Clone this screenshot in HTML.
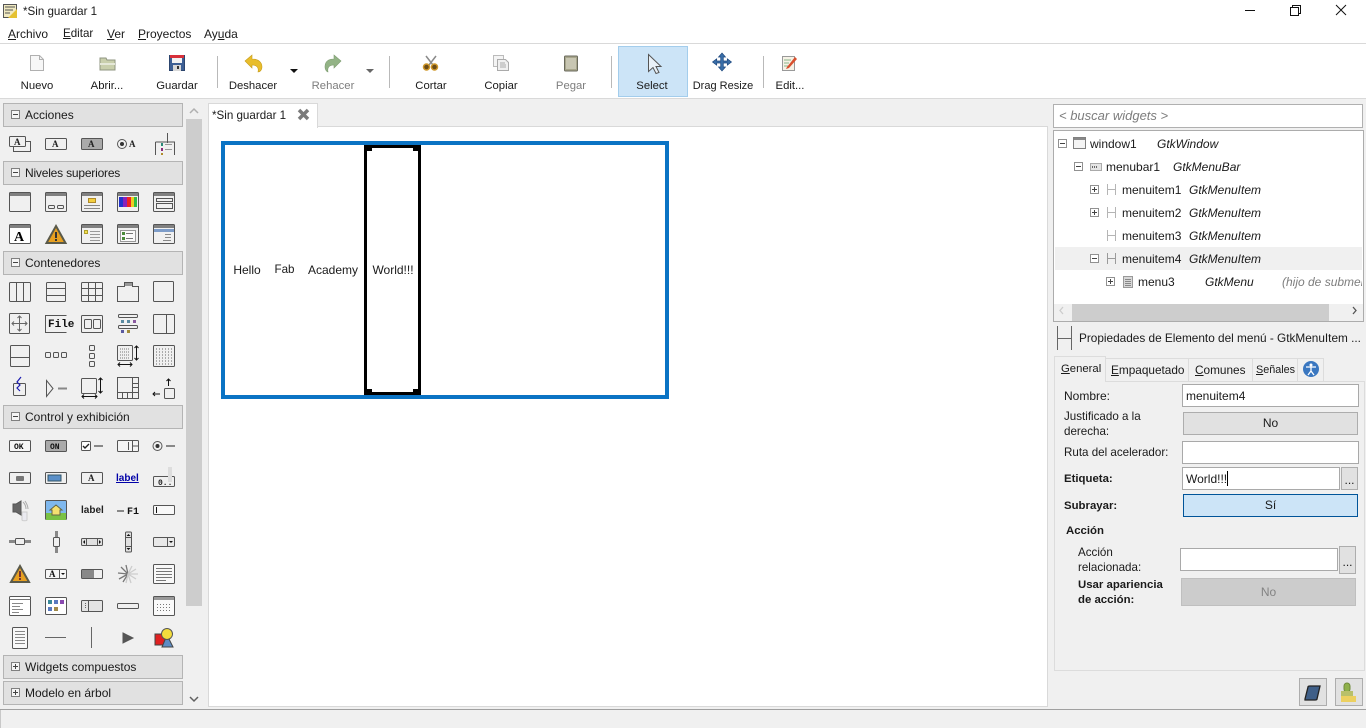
<!DOCTYPE html>
<html lang="es"><head><meta charset="utf-8"><title>Sin guardar 1</title>
<style>
html,body{margin:0;padding:0;width:1366px;height:728px;overflow:hidden;background:#f0f0f0;font-family:"Liberation Sans",sans-serif;font-size:12px;color:#1a1a1a}
.a{position:absolute;box-sizing:border-box}
.t{position:absolute;white-space:nowrap;line-height:16px;height:16px}
.c{text-align:center}
.g{color:#7d7d7d}
.i{font-style:italic}
.b{font-weight:bold;font-size:11.400px}
.s{font-size:11.300px}
.m{font-size:11.600px}
.h{position:absolute;left:3px;width:180px;height:24px;background:#e1e1e1;border:1px solid #b4b4b4;box-sizing:border-box}
.h span{position:absolute;left:21px;top:3px;line-height:16px;white-space:nowrap}
.h i{position:absolute;left:7px;top:6px;width:9px;height:9px;border:1px solid #808080;box-sizing:border-box;background:#f5f5f5}
.h i:before{content:"";position:absolute;left:1px;top:3px;width:5px;height:1px;background:#444}
.h i.p:after{content:"";position:absolute;left:3px;top:1px;width:1px;height:5px;background:#444}
.e{position:absolute;box-sizing:border-box;background:#fff;border:1px solid #a9a9a9}
.btn{position:absolute;box-sizing:border-box;background:#e1e1e1;border:1px solid #adadad;text-align:center}
.x{position:absolute;width:9px;height:9px;border:1px solid #919191;box-sizing:border-box;background:#fff}
.x:before{content:"";position:absolute;left:1px;top:3px;width:5px;height:1px;background:#444}
.x.p:after{content:"";position:absolute;left:3px;top:1px;width:1px;height:5px;background:#444}
u{text-decoration:underline}
svg{position:absolute;left:0;top:0}
</style></head><body>

<!-- title + toolbar background -->
<div class="a" style="left:0;top:0;width:1366px;height:44px;background:#fff;border-bottom:1px solid #d9d9d9"></div>
<div class="a" style="left:0;top:44px;width:1366px;height:55px;background:#fff;border-bottom:1px solid #d9d9d9"></div>

<div class="t m" style="left:23px;top:4px">*Sin guardar 1</div>
<div class="t" style="left:8px;top:26px"><u>A</u>rchivo</div>
<div class="t m" style="left:63px;top:26px"><u>E</u>ditar</div>
<div class="t" style="left:107px;top:26px"><u>V</u>er</div>
<div class="t" style="left:138px;top:26px"><u>P</u>royectos</div>
<div class="t" style="left:204px;top:26px">Ay<u>u</u>da</div>

<div class="a" style="left:618px;top:46px;width:70px;height:51px;background:#cce4f7;border:1px solid #a3cdec"></div>

<div class="t c s" style="left:7px;width:60px;top:78px">Nuevo</div>
<div class="t c s" style="left:77px;width:60px;top:78px">Abrir...</div>
<div class="t c s" style="left:147px;width:60px;top:78px">Guardar</div>
<div class="t c s" style="left:223px;width:60px;top:78px">Deshacer</div>
<div class="t c g s" style="left:303px;width:60px;top:78px">Rehacer</div>
<div class="t c s" style="left:401px;width:60px;top:78px">Cortar</div>
<div class="t c s" style="left:471px;width:60px;top:78px">Copiar</div>
<div class="t c g s" style="left:541px;width:60px;top:78px">Pegar</div>
<div class="t c s" style="left:622px;width:60px;top:78px">Select</div>
<div class="t c" style="left:688px;width:70px;top:78px;font-size:11px">Drag Resize</div>
<div class="t c s" style="left:760px;width:60px;top:78px">Edit...</div>

<!-- palette headers -->
<div class="h" style="top:103px"><i></i><span>Acciones</span></div>
<div class="h" style="top:161px"><i></i><span style="letter-spacing:-.2px">Niveles superiores</span></div>
<div class="h" style="top:251px"><i></i><span>Contenedores</span></div>
<div class="h" style="top:405px"><i></i><span>Control y exhibición</span></div>
<div class="h" style="top:655px"><i class="p"></i><span>Widgets compuestos</span></div>
<div class="h" style="top:681px"><i class="p"></i><span>Modelo en árbol</span></div>

<!-- palette scrollbar -->
<div class="a" style="left:186px;top:119px;width:16px;height:487px;background:#cdcdcd"></div>

<!-- notebook -->
<div class="a" style="left:208px;top:126px;width:840px;height:581px;background:#fff;border:1px solid #d9d9d9"></div>
<div class="a" style="left:208px;top:103px;width:110px;height:25px;background:#fff;border:1px solid #d9d9d9;border-bottom:none"></div>
<div class="t m" style="left:212px;top:108px">*Sin guardar 1</div>

<!-- design surface -->
<div class="a" style="left:221px;top:141px;width:448px;height:258px;background:#fff;border:4px solid #0a73c4"></div>
<div class="t c" style="left:226px;width:42px;top:262px">Hello</div>
<div class="t c m" style="left:268px;width:33px;top:262px">Fab</div>
<div class="t c" style="left:301px;width:64px;top:262px">Academy</div>
<div class="t c" style="left:365px;width:56px;top:262px">World!!!</div>
<div class="a" style="left:364px;top:145px;width:57px;height:250px;border:3px solid #000"></div>
<div class="a" style="left:364px;top:145px;width:8px;height:6px;background:#000"></div>
<div class="a" style="left:413px;top:145px;width:8px;height:6px;background:#000"></div>
<div class="a" style="left:364px;top:389px;width:8px;height:6px;background:#000"></div>
<div class="a" style="left:413px;top:389px;width:8px;height:6px;background:#000"></div>

<!-- search -->
<div class="e" style="left:1053px;top:104px;width:310px;height:24px;border-color:#b0b0b0"></div>
<div class="t i g" style="left:1059px;top:108px;font-size:13px">&lt; buscar widgets &gt;</div>

<!-- tree -->
<div class="e" style="left:1053px;top:130px;width:311px;height:192px;border-color:#acacac"></div>
<div class="a" style="left:1055px;top:247px;width:307px;height:23px;background:#f0f0f0"></div>
<div class="x" style="left:1058px;top:139px"></div>
<div class="x" style="left:1074px;top:162px"></div>
<div class="x p" style="left:1090px;top:185px"></div>
<div class="x p" style="left:1090px;top:208px"></div>
<div class="x" style="left:1090px;top:254px"></div>
<div class="x p" style="left:1106px;top:277px"></div>
<div class="t" style="left:1090px;top:136px">window1</div><div class="t i" style="left:1157px;top:136px">GtkWindow</div>
<div class="t" style="left:1106px;top:159px">menubar1</div><div class="t i" style="left:1173px;top:159px">GtkMenuBar</div>
<div class="t" style="left:1122px;top:182px">menuitem1</div><div class="t i" style="left:1189px;top:182px">GtkMenuItem</div>
<div class="t" style="left:1122px;top:205px">menuitem2</div><div class="t i" style="left:1189px;top:205px">GtkMenuItem</div>
<div class="t" style="left:1122px;top:228px">menuitem3</div><div class="t i" style="left:1189px;top:228px">GtkMenuItem</div>
<div class="t" style="left:1122px;top:251px">menuitem4</div><div class="t i" style="left:1189px;top:251px">GtkMenuItem</div>
<div class="t" style="left:1138px;top:274px">menu3</div><div class="t i" style="left:1205px;top:274px">GtkMenu</div>
<div class="a" style="left:1282px;top:274px;width:80px;height:16px;overflow:hidden"><div class="t i g" style="left:0;top:0">(hijo de submenu)</div></div>
<div class="a" style="left:1054px;top:304px;width:309px;height:17px;background:#f0f0f0"></div>
<div class="a" style="left:1072px;top:304px;width:257px;height:17px;background:#cdcdcd"></div>

<!-- properties header -->
<div class="t" style="left:1079px;top:330px;font-size:11.800px">Propiedades de Elemento del menú - GtkMenuItem ...</div>

<!-- tabs -->
<div class="a" style="left:1054px;top:381px;width:311px;height:290px;border:1px solid #dcdcdc;background:#f0f0f0"></div>
<div class="a" style="left:1054px;top:356px;width:52px;height:26px;background:#f0f0f0;border:1px solid #dcdcdc;border-bottom:none"></div>
<div class="a" style="left:1106px;top:358px;width:83px;height:23px;border:1px solid #dcdcdc;border-left:none;border-bottom:none"></div>
<div class="a" style="left:1189px;top:358px;width:64px;height:23px;border:1px solid #dcdcdc;border-left:none;border-bottom:none"></div>
<div class="a" style="left:1253px;top:358px;width:45px;height:23px;border:1px solid #dcdcdc;border-left:none;border-bottom:none"></div>
<div class="a" style="left:1298px;top:358px;width:26px;height:23px;border:1px solid #dcdcdc;border-left:none;border-bottom:none"></div>
<div class="t" style="left:1061px;top:361px;font-size:11.300px"><u>G</u>eneral</div>
<div class="t" style="left:1111px;top:362px;font-size:11.800px"><u>E</u>mpaquetado</div>
<div class="t" style="left:1195px;top:362px;font-size:11.800px"><u>C</u>omunes</div>
<div class="t" style="left:1256px;top:362px;font-size:10.800px"><u>S</u>eñales</div>

<!-- form -->
<div class="t" style="left:1064px;top:388px">Nombre:</div>
<div class="e" style="left:1182px;top:384px;width:177px;height:23px"></div>
<div class="t" style="left:1186px;top:388px">menuitem4</div>
<div class="t m" style="left:1064px;top:409px">Justificado a la</div>
<div class="t m" style="left:1064px;top:424px">derecha:</div>
<div class="btn" style="left:1183px;top:412px;width:175px;height:23px;line-height:21px">No</div>
<div class="t m" style="left:1064px;top:445px">Ruta del acelerador:</div>
<div class="e" style="left:1182px;top:441px;width:177px;height:23px"></div>
<div class="t b" style="left:1064px;top:471px">Etiqueta:</div>
<div class="e" style="left:1182px;top:467px;width:158px;height:23px"></div>
<div class="t" style="left:1186px;top:471px">World!!!</div>
<div class="a" style="left:1227px;top:471px;width:1px;height:15px;background:#000"></div>
<div class="btn" style="left:1341px;top:467px;width:17px;height:23px;line-height:24px">...</div>
<div class="t b" style="left:1064px;top:498px">Subrayar:</div>
<div class="btn" style="left:1183px;top:494px;width:175px;height:23px;line-height:21px;background:#cce4f7;border-color:#005499">Sí</div>
<div class="t b" style="left:1066px;top:523px">Acción</div>
<div class="t m" style="left:1078px;top:545px">Acción</div>
<div class="t m" style="left:1078px;top:560px">relacionada:</div>
<div class="e" style="left:1180px;top:548px;width:158px;height:23px"></div>
<div class="btn" style="left:1339px;top:546px;width:17px;height:28px;line-height:30px">...</div>
<div class="t b" style="left:1078px;top:577px">Usar apariencia</div>
<div class="t b" style="left:1078px;top:592px">de acción:</div>
<div class="btn" style="left:1181px;top:578px;width:175px;height:28px;line-height:26px;background:#cccccc;border-color:#bfbfbf;color:#838383">No</div>

<div class="btn" style="left:1299px;top:678px;width:28px;height:28px"></div>
<div class="btn" style="left:1335px;top:678px;width:28px;height:28px"></div>

<!-- status -->
<div class="a" style="left:0;top:709px;width:1366px;height:1px;background:#a0a0a0"></div>
<div class="a" style="left:0;top:710px;width:1px;height:18px;background:#c8c8c8"></div>

<!-- vector layer -->
<svg width="1366" height="728" viewBox="0 0 1366 728" font-family="Liberation Sans, sans-serif">
<!-- window controls -->
<g fill="none" stroke="#111" stroke-width="1">
<path d="M1245 10.500h10"/>
<path d="M1290.500 7.500h8v8h-8z"/><path d="M1292.500 7.500v-2h8v8h-2"/>
<path d="M1336 5l10 10M1346 5l-10 10"/>
</g>
<!-- app icon -->
<rect x="3.500" y="4.500" width="13" height="13" fill="#f0e9c0" stroke="#555"/>
<path d="M5 7h10M5 10h8M5 13h5" stroke="#555"/>
<path d="M8 18L17 9v9z" fill="#e5c233"/>

<!-- toolbar icons -->
<path d="M30.500 55.500h9l4 4v11h-13z" fill="#f7f7f7" stroke="#b0b0b0"/>
<path d="M39.500 55.500v4h4" fill="none" stroke="#b0b0b0"/>
<path d="M100 58h6l1 2h8v10H100z" fill="#c9cfac" stroke="#8f9480"/><path d="M100 64h15" stroke="#e5e8d8" stroke-width="2"/>
<rect x="169.500" y="55.500" width="15" height="15" fill="#3d5f94" stroke="#2c456e"/><rect x="170" y="55" width="14" height="3" fill="#d8303a"/><rect x="172" y="58" width="10" height="5" fill="#f2f2f2"/><rect x="173" y="65" width="8" height="6" fill="#d8d8d8"/><rect x="177" y="66" width="2" height="3" fill="#333"/>
<path d="M245 61l7-6v4c6 0 10 3 10 8 0 3-2 5-4 5 1-4-1-7-6-7v3z" fill="#e8bd2c" stroke="#c79c1c" stroke-width=".6"/>
<path d="M341 61l-7-6v4c-6 0-9 3-9 8 0 3 2 5 3 5-1-4 1-7 6-7v3z" fill="#93b386" stroke="#7d9c70" stroke-width=".6"/>
<path d="M290 69h8l-4 4z" fill="#111"/><path d="M366 69h8l-4 4z" fill="#666"/>
<path d="M426 56l7 9M436 56l-7 9" stroke="#8a8a8a" stroke-width="1.500"/><circle cx="426.500" cy="67" r="3" fill="#6b4c18" stroke="#d0982a" stroke-width="1.500"/><circle cx="434.500" cy="67" r="3" fill="#6b4c18" stroke="#d0982a" stroke-width="1.500"/>
<rect x="493.500" y="55.500" width="10" height="11" fill="#f4f4f4" stroke="#bbb"/><path d="M497.500 59.500h8l3 3v8h-11z" fill="#f0f0f0" stroke="#aaa"/><path d="M500 63h5M500 65h6M500 67h6" stroke="#aaa"/>
<rect x="564.500" y="56" width="13" height="15" rx="1" fill="#a8a68c" stroke="#6a6a5c"/><rect x="566" y="58" width="10" height="11" fill="#c8c6b2"/>
<path d="M648.500 54.500l12.500 12h-5l3 6-3 1-3-6-4.500 4z" fill="#e9f1f8" stroke="#555"/>
<g fill="#3a6ea8" stroke="#1f4a80" stroke-width=".7"><path d="M722 53l3.500 4h-2.200v4h4v-2.200l4.200 3.200-4.200 3.200v-2.200h-4v4h2.200l-3.500 4-3.500-4h2.200v-4h-4v2.200l-4.200-3.200 4.200-3.200v2.200h4v-4h-2.200z"/></g>
<rect x="782.500" y="56.500" width="12" height="14" fill="#f6f2e6" stroke="#999"/><path d="M784 60h7M784 63h5M784 66h4" stroke="#8ab58a"/><path d="M787 67l8-10 2 2-8 9-3 1z" fill="#d9502e"/>

<!-- separators -->
<g fill="#b9b9b9"><rect x="217" y="56" width="1" height="32"/><rect x="389" y="56" width="1" height="32"/><rect x="611" y="56" width="1" height="32"/><rect x="763" y="56" width="1" height="32"/></g>

<!-- palette scroll arrows -->
<path d="M190 113l4-4 4 4" fill="none" stroke="#b0b0b0" stroke-width="1.500"/>
<path d="M190 697l4 4 4-4" fill="none" stroke="#606060" stroke-width="1.500"/>

<!-- tab close -->
<path d="M299 110l9 9M308 110l-9 9" stroke="#7a7a7a" stroke-width="3.500"/>

<!-- palette icons -->
<g fill="#f0f0f0" stroke="#555" stroke-width="1" font-weight="bold" font-size="9" font-family="Liberation Serif, serif">
<!-- row acciones -->
<rect x="13.500" y="141.500" width="17" height="10"/><rect x="9.500" y="136.500" width="16" height="10" rx="1"/>
<text x="14" y="145" fill="#222" stroke="none">A</text>
<rect x="45.500" y="138.500" width="21" height="11" rx="1"/><text x="52" y="147" fill="#222" stroke="none">A</text>
<rect x="81.500" y="138.500" width="21" height="11" rx="1" fill="#aaa"/><text x="88" y="147" fill="#222" stroke="none">A</text>
<circle cx="122" cy="144" r="4.500" fill="#f0f0f0"/><circle cx="122" cy="144" r="2" fill="#333" stroke="none"/><text x="129" y="147" fill="#222" stroke="none">A</text>
<path d="M155.500 142v13M167.500 133v10M155.500 142h19v13M155.500 142" fill="none"/>
<rect x="161" y="143" width="2" height="3" fill="#2a8a7a" stroke="none"/><rect x="161" y="148" width="2" height="3" fill="#8a2a7a" stroke="none"/><rect x="161" y="153" width="2" height="2" fill="#b08a2a" stroke="none"/>
<path d="M165 144.500h7M165 149.500h7" stroke="#999"/>

<!-- niveles row 1 -->
<rect x="9.500" y="192.500" width="21" height="19" rx="1"/><rect x="10" y="193" width="20" height="3" fill="#808080" stroke="none"/>
<rect x="45.500" y="192.500" width="21" height="19" rx="1"/><rect x="46" y="193" width="20" height="3" fill="#808080" stroke="none"/><rect x="48.500" y="205.500" width="6" height="3" rx="1"/><rect x="57.500" y="205.500" width="6" height="3" rx="1"/>
<rect x="81.500" y="192.500" width="21" height="19" rx="1"/><rect x="82" y="193" width="20" height="3" fill="#808080" stroke="none"/><rect x="88.500" y="198.500" width="7" height="4" fill="#f3cf3f" stroke="#b08a2a"/><path d="M84 205.500h16M84 208.500h16" stroke="#888"/>
<rect x="117.500" y="192.500" width="21" height="19" rx="1"/><rect x="118" y="193" width="20" height="3" fill="#808080" stroke="none"/>
<rect x="119" y="197" width="4" height="10" fill="#2233cc" stroke="none"/><rect x="123" y="197" width="4" height="10" fill="#8822bb" stroke="none"/><rect x="127" y="197" width="4" height="10" fill="#ee2222" stroke="none"/><rect x="131" y="197" width="3" height="10" fill="#eecc22" stroke="none"/><rect x="134" y="197" width="3" height="10" fill="#33bb44" stroke="none"/>
<rect x="153.500" y="192.500" width="21" height="19" rx="1"/><rect x="154" y="193" width="20" height="3" fill="#808080" stroke="none"/><rect x="156.500" y="198.500" width="16" height="3" fill="none"/><rect x="156.500" y="203.500" width="16" height="5" fill="none"/>

<!-- niveles row 2 -->
<rect x="9.500" y="224.500" width="21" height="19" rx="1" fill="#fff"/><rect x="10" y="225" width="20" height="3" fill="#808080" stroke="none"/><text x="14" y="241" font-size="14" fill="#000" stroke="none">A</text>
<path d="M56 226l9.500 17h-19z" fill="#e8a020" stroke="#5a5a4a" stroke-width="2"/><rect x="55" y="232" width="2" height="6" fill="#333" stroke="none"/><rect x="55" y="239" width="2" height="2" fill="#333" stroke="none"/>
<rect x="81.500" y="224.500" width="21" height="19" rx="1"/><rect x="82" y="225" width="20" height="3" fill="#808080" stroke="none"/><rect x="84.500" y="230.500" width="3" height="3" fill="#f3e04f" stroke="#b0a02a"/><path d="M90 231.500h10M90 234.500h10M90 237.500h10M90 240.500h10" stroke="#999"/>
<rect x="117.500" y="224.500" width="21" height="19" rx="1"/><rect x="118" y="225" width="20" height="3" fill="#808080" stroke="none"/><rect x="120.500" y="230.500" width="15" height="11" fill="#fafafa" stroke="#999"/><rect x="122" y="232" width="3" height="3" fill="#4a8a3a" stroke="none"/><rect x="122" y="237" width="3" height="3" fill="#4a8a3a" stroke="none"/><path d="M126 233.500h7M126 238.500h7" stroke="#777"/>
<rect x="153.500" y="224.500" width="21" height="19" rx="1"/><rect x="154" y="225" width="20" height="3" fill="#808080" stroke="none"/><rect x="154" y="229" width="20" height="3" fill="#7d9cc8" stroke="none"/><path d="M165 234.500h6M165 237.500h6M163 240.500h8" stroke="#888"/>

<!-- contenedores 292 -->
<rect x="9.500" y="282.500" width="21" height="19" rx="1"/><path d="M16.500 282.500v19M23.500 282.500v19"/>
<rect x="46.500" y="282.500" width="19" height="19" rx="1"/><path d="M46.500 288.500h19M46.500 295.500h19"/>
<rect x="81.500" y="282.500" width="21" height="19" rx="1"/><path d="M88.500 282.500v19M95.500 282.500v19M81.500 288.500h21M81.500 295.500h21"/>
<path d="M117.500 301.500v-15h7v-4h8v4h6v15z"/><rect x="125" y="283" width="7" height="3" fill="#999" stroke="none"/>
<rect x="153.500" y="281.500" width="20" height="20" rx="1"/>

<!-- 324 -->
<rect x="9.500" y="313.500" width="20" height="20" rx="1"/><path d="M19.500 316v15M12 323.500h15M17.500 318l2-2 2 2M17.500 329l2 2 2-2M14 321.500l-2 2 2 2M25 321.500l2 2-2 2" fill="none" stroke="#666"/>
<path d="M66.500 315.500h-21v17h21" fill="#f0f0f0"/><text x="48" y="327" font-family="Liberation Mono, monospace" font-size="11" fill="#111" stroke="none">File</text>
<rect x="81.500" y="315.500" width="21" height="17" rx="1"/><rect x="84.500" y="319.500" width="7" height="9" rx="1"/><rect x="93.500" y="319.500" width="7" height="9" rx="1"/>
<rect x="118.500" y="314.500" width="19" height="3" rx="1" fill="none"/><rect x="118.500" y="325.500" width="19" height="3" rx="1" fill="none"/>
<rect x="121" y="320" width="3" height="3" fill="#5a8aa0" stroke="none"/><rect x="127" y="320" width="3" height="3" fill="#5a8aa0" stroke="none"/><rect x="133" y="320" width="3" height="3" fill="#8a5aa0" stroke="none"/><rect x="121" y="330" width="3" height="3" fill="#5a5aa0" stroke="none"/><rect x="127" y="330" width="3" height="3" fill="#a08a3a" stroke="none"/>
<rect x="153.500" y="314.500" width="21" height="19" rx="1"/><path d="M166.500 314.500v19"/>

<!-- 356 -->
<rect x="10.500" y="345.500" width="19" height="21" rx="1"/><path d="M10.500 357.500h19"/>
<rect x="45.500" y="352.500" width="5" height="5" rx="1"/><rect x="53.500" y="352.500" width="5" height="5" rx="1"/><rect x="61.500" y="352.500" width="5" height="5" rx="1"/>
<rect x="89.500" y="345.500" width="5" height="5" rx="1"/><rect x="89.500" y="353.500" width="5" height="5" rx="1"/><rect x="89.500" y="361.500" width="5" height="5" rx="1"/>
<rect x="117.500" y="345.500" width="15" height="15" rx="1"/><path d="M120 349h10M120 352h10M120 355h10M120 358h10" stroke="#777" stroke-dasharray="1 1"/><path d="M136.500 346v14M134.500 348l2-2 2 2M134.500 358l2 2 2-2M118 364.500h14M120 362.500l-2 2 2 2M130 362.500l2 2-2 2" fill="none" stroke="#111"/>
<rect x="153.500" y="345.500" width="21" height="21" rx="1"/><path d="M156 349h16M156 352h16M156 355h16M156 358h16M156 361h16M156 364h16" stroke="#666" stroke-dasharray="1 2"/>

<!-- 388 -->
<rect x="13.500" y="383.500" width="12" height="12" rx="1"/><path d="M21 377l-4 5 3 3-3 3 3 3" fill="none" stroke="#1a1ab0" stroke-width="1.200"/>
<path d="M46.500 380.500l6.500 8-6.500 8z"/><path d="M58 388.500h9" stroke="#888" stroke-width="2"/>
<rect x="81.500" y="378.500" width="15" height="15" rx="1"/><path d="M100.500 378v15M98.500 380l2-2 2 2M98.500 391l2 2 2-2M82 396.500h15M84 394.500l-2 2 2 2M95 394.500l2 2-2 2" fill="none" stroke="#111"/>
<rect x="117.500" y="377.500" width="21" height="21" fill="#f0f0f0"/><path d="M132.500 377.500v21M117.500 392.500h21M132.500 383.500h6M132.500 387.500h6M122.500 392.500v6M127.500 392.500v6"/>
<path d="M168.500 386v-7M166.500 381l2-2 2 2M153 394h7M155 392l-2 2 2 2" fill="none" stroke="#111"/><rect x="164.500" y="388.500" width="10" height="10" rx="1"/>

<!-- 446 -->
<rect x="9.500" y="440.500" width="21" height="11" rx="1" fill="#f5f5f5"/><text x="14" y="449" font-family="Liberation Mono, monospace" font-size="8" fill="#111" stroke="none">OK</text>
<rect x="45.500" y="440.500" width="21" height="11" rx="1" fill="#aaa"/><text x="50" y="449" font-family="Liberation Mono, monospace" font-size="8" fill="#111" stroke="none">ON</text>
<rect x="81.500" y="441.500" width="9" height="9" rx="1" fill="#fff"/><path d="M83 446l2 2 4-4" fill="none" stroke="#222" stroke-width="1.400"/><path d="M94 446h9" stroke="#888" stroke-width="2"/>
<rect x="117.500" y="440.500" width="21" height="11" rx="1" fill="#f5f5f5"/><path d="M128.500 442v8M132.500 440.500v11M132.500 446h6"/>
<circle cx="157.500" cy="446" r="4.500"/><circle cx="157.500" cy="446" r="2" fill="#333" stroke="none"/><path d="M166 446h9" stroke="#888" stroke-width="2"/>

<!-- 478 -->
<rect x="9.500" y="472.500" width="21" height="11" rx="1"/><rect x="16" y="476" width="8" height="5" rx="1" fill="#777" stroke="none"/>
<rect x="45.500" y="472.500" width="21" height="11" rx="1"/><rect x="48" y="475" width="13" height="6" fill="#5a8fc8" stroke="#356"/>
<rect x="81.500" y="472.500" width="21" height="11" rx="1"/><text x="88" y="481" fill="#222" stroke="none">A</text>
<text x="116" y="481" font-family="Liberation Sans, sans-serif" font-size="10" fill="#0000a8" stroke="none" text-decoration="underline">label</text>
<rect x="153.500" y="476.500" width="21" height="10" rx="1"/><text x="158" y="485" font-family="Liberation Mono, monospace" font-size="8" fill="#222" stroke="none">0..</text><rect x="168" y="467" width="4" height="15" fill="#ddd" stroke="none"/>

<!-- 510 -->
<path d="M13 504h3l5-3v14l-5-3h-3z" fill="#666"/><path d="M23 502c2 2 3 4 3 7M25 501c2 3 3 5 3 8" fill="none" stroke="#aaa"/><path d="M22 512h5v8c0 1-5 1-5 0z" fill="#eaeaf0" stroke="#ccc"/>
<rect x="45.500" y="500.500" width="21" height="19" rx="1" fill="#7fb8ee"/><rect x="46" y="513" width="20" height="7" fill="#7ac144" stroke="none"/><path d="M50 510l6-5 6 5h-2v5h-8v-5z" fill="#f5e070" stroke="#664"/>
<text x="81" y="513" font-family="Liberation Sans, sans-serif" font-size="10" fill="#222" stroke="none">label</text>
<path d="M117 511h7" stroke="#888" stroke-width="2"/><text x="127" y="514" font-family="Liberation Mono, monospace" font-size="10" fill="#111" stroke="none">F1</text>
<rect x="153.500" y="505.500" width="21" height="9" rx="1" fill="#f8f8f8"/><path d="M156.500 507v6" stroke="#111"/>

<!-- 542 -->
<path d="M9 541.500h22" stroke="#888" stroke-width="3"/><rect x="15.500" y="538.500" width="9" height="6" rx="1" fill="#f0f0f0"/>
<path d="M56.500 531v22" stroke="#888" stroke-width="3"/><rect x="53.500" y="537.500" width="6" height="9" rx="1" fill="#f0f0f0"/>
<rect x="81.500" y="538.500" width="21" height="7" rx="1" fill="#e0e0e0"/><path d="M86.500 538.500v7M97.500 538.500v7"/><path d="M85 540l-2 2 2 2zM99 540l2 2-2 2z" fill="#111" stroke="none"/>
<rect x="125.500" y="532" width="6" height="20" rx="1" fill="#e0e0e0"/><path d="M125.500 537.500h6M125.500 546.500h6"/><path d="M126.500 536l2-2 2 2zM126.500 548l2 2 2-2z" fill="#111" stroke="none"/>
<rect x="153.500" y="537.500" width="21" height="9" rx="1" fill="#e8e8e8"/><path d="M167.500 537.500v9"/><path d="M169 541h4l-2 2z" fill="#111" stroke="none"/>

<!-- 574 -->
<path d="M20 566l9 16H11z" fill="#e8a020" stroke="#5a5a4a" stroke-width="2"/><rect x="19" y="571" width="2" height="6" fill="#733" stroke="none"/><rect x="19" y="578" width="2" height="2" fill="#733" stroke="none"/>
<rect x="45.500" y="569.500" width="21" height="9" rx="1" fill="#f6f6f6"/><path d="M59.500 569.500v9"/><text x="49" y="577" fill="#111" stroke="none">A</text><path d="M61 573h4l-2 2z" fill="#111" stroke="none"/>
<rect x="81.500" y="569.500" width="21" height="9" rx="1"/><rect x="82" y="570" width="12" height="8" fill="#888" stroke="none"/>
<g stroke="#777" stroke-width="1.300"><path d="M128 574l-10-1M128 574l-7-7M128 574l-2-9M128 574l-9 5M128 574l-5 8"/></g><g stroke="#ccc" stroke-width="1.300"><path d="M128 574l4-8M128 574l8-5M128 574l10 0M128 574l8 5M128 574l3 9M128 574l-2 9"/></g>
<rect x="153.500" y="564.500" width="21" height="19" rx="1" fill="#f8f8f8"/><path d="M156 568.500h16M156 571.500h16M156 574.500h16M156 577.500h16M156 580.500h10" stroke="#777"/>

<!-- 606 -->
<rect x="9.500" y="596.500" width="21" height="19" rx="1" fill="#fff"/><path d="M9.500 599.500h21" stroke="#777"/><path d="M12 603.500h11M12 606.500h8M12 609.500h11M12 612.500h7" stroke="#888"/>
<rect x="45.500" y="597.500" width="21" height="17" rx="1" fill="#fff"/><rect x="48" y="600" width="4" height="4" fill="#3a8a9a" stroke="none"/><rect x="54" y="600" width="4" height="4" fill="#5a7ac0" stroke="none"/><rect x="60" y="600" width="4" height="4" fill="#8a4ab0" stroke="none"/><rect x="48" y="607" width="4" height="4" fill="#5a7ac0" stroke="none"/><rect x="54" y="607" width="4" height="4" fill="#a08a4a" stroke="none"/>
<rect x="81.500" y="600.500" width="21" height="11" rx="1" fill="#e4e4e4"/><path d="M88.500 600.500v11"/><path d="M85.500 603v6" stroke="#666" stroke-dasharray="1 1"/>
<rect x="117.500" y="603.500" width="21" height="5" rx="1"/>
<rect x="153.500" y="596.500" width="21" height="19" rx="1" fill="#fafafa"/><rect x="154" y="597" width="20" height="3" fill="#999" stroke="none"/><path d="M157 604.500h15M157 607.500h15M157 610.500h15" stroke="#777" stroke-dasharray="1 2"/>

<!-- 638 -->
<rect x="12.500" y="627.500" width="15" height="21" rx="1" fill="#f8f8f8"/><path d="M15 631.500h10M15 634.500h10M15 637.500h10M15 640.500h10M15 643.500h10" stroke="#888"/>
<path d="M45 637.500h21" stroke="#666"/>
<path d="M91.500 627v21" stroke="#666"/>
<path d="M123 633l10 5-10 5z" fill="#555" stroke="#555"/>
<rect x="155" y="634" width="11" height="11" fill="#e02020" stroke="#444"/><path d="M167 635l6 12h-11z" fill="#5d8cc4" stroke="#444"/><circle cx="167" cy="634" r="5.500" fill="#f3dc3c" stroke="#555"/>
</g>

<!-- tree icons -->
<rect x="1073.500" y="137.500" width="12" height="11" fill="#f4f4f4" stroke="#808080"/><rect x="1074" y="138" width="11" height="2" fill="#888"/>
<rect x="1090.500" y="163.500" width="11" height="7" fill="#e4e4e4" stroke="#aaa"/><path d="M1092 167h5" stroke="#666" stroke-width="2" stroke-dasharray="1 1"/>
<g fill="none" stroke="#b5b5b5"><path d="M1107.500 184v11M1115.500 184v11M1107.500 189.500h8"/><path d="M1107.500 207v11M1115.500 207v11M1107.500 212.500h8"/><path d="M1107.500 230v11M1115.500 230v11M1107.500 235.500h8"/><path d="M1107.500 253v11M1115.500 253v11M1107.500 258.500h8" stroke="#9a9a9a"/></g>
<rect x="1123.500" y="276.500" width="9" height="11" fill="#d8d8d8" stroke="#999"/><path d="M1125 279.500h6M1125 281.500h6M1125 283.500h6M1125 285.500h6" stroke="#888"/>
<path d="M1063 307l-3 3.500 3 3.500" fill="none" stroke="#ccc" stroke-width="1.300"/>
<path d="M1353 307l3 3.500-3 3.500" fill="none" stroke="#555" stroke-width="1.300"/>

<!-- props icon -->
<path d="M1057.500 326v24M1071.500 326v24M1057.500 338.500h14" fill="none" stroke="#666"/>
<!-- accessibility -->
<circle cx="1311" cy="369" r="8" fill="#3a77c0"/><circle cx="1311" cy="365" r="1.500" fill="#fff"/><path d="M1306 367h10M1311 367v4M1311 371l-3 4M1311 371l3 4" stroke="#fff" stroke-width="1.300" fill="none"/>

<!-- bottom buttons -->
<path d="M1305 699l3-12c0-1 1-1 2-1h10l-3 13c0 1-1 1-2 1h-10z" fill="#3f5f88" stroke="#222" stroke-width="1.300"/>
<rect x="1344" y="683" width="6" height="9" rx="3" fill="#8fb04a" stroke="#6f8a3a"/><rect x="1341" y="691" width="12" height="5" fill="#b8c06a"/><rect x="1341" y="696" width="15" height="6" fill="#ecd060"/>
</svg>
</body></html>
